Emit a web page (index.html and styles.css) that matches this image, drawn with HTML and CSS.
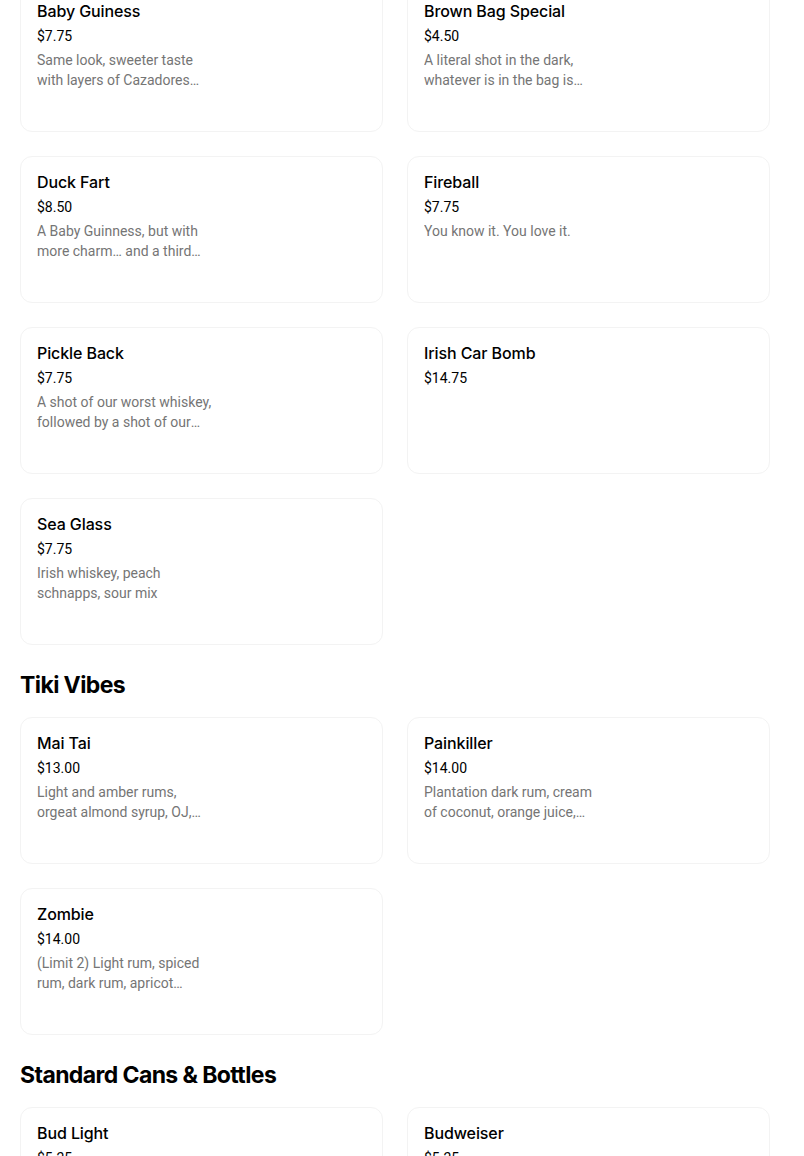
FILE: index.html
```html
<!DOCTYPE html>
<html>
<head>
<meta charset="utf-8">
<link rel="stylesheet" href="styles.css">
</head>
<body>
<main class="menu">
  <section class="section first">
    <div class="grid">
      <div class="card"><div class="name">Baby Guiness</div><div class="price">$7.75</div><div class="desc">Same look, sweeter taste with layers of Cazadores tequila</div></div>
      <div class="card"><div class="name">Brown Bag Special</div><div class="price">$4.50</div><div class="desc">A literal shot in the dark, whatever is in the bag is yours</div></div>
      <div class="card"><div class="name">Duck Fart</div><div class="price">$8.50</div><div class="desc">A Baby Guinness, but with more charm… and a third layer</div></div>
      <div class="card"><div class="name">Fireball</div><div class="price">$7.75</div><div class="desc">You know it. You love it.</div></div>
      <div class="card"><div class="name">Pickle Back</div><div class="price">$7.75</div><div class="desc">A shot of our worst whiskey, followed by a shot of our pickle brine</div></div>
      <div class="card"><div class="name">Irish Car Bomb</div><div class="price">$14.75</div></div>
      <div class="card"><div class="name">Sea Glass</div><div class="price">$7.75</div><div class="desc">Irish whiskey, peach schnapps, sour mix</div></div>
    </div>
  </section>
  <section class="section">
    <h2 class="heading">Tiki Vibes</h2>
    <div class="grid">
      <div class="card"><div class="name">Mai Tai</div><div class="price">$13.00</div><div class="desc">Light and amber rums, orgeat almond syrup, OJ, pineapple juice</div></div>
      <div class="card"><div class="name">Painkiller</div><div class="price">$14.00</div><div class="desc">Plantation dark rum, cream of coconut, orange juice, pineapple juice</div></div>
      <div class="card"><div class="name">Zombie</div><div class="price">$14.00</div><div class="desc">(Limit 2) Light rum, spiced rum, dark rum, apricot brandy</div></div>
    </div>
  </section>
  <section class="section">
    <h2 class="heading">Standard Cans &amp; Bottles</h2>
    <div class="grid">
      <div class="card"><div class="name">Bud Light</div><div class="price">$5.25</div></div>
      <div class="card"><div class="name">Budweiser</div><div class="price">$5.25</div></div>
    </div>
  </section>
</main>
</body>
</html>
```

FILE: styles.css
```css
html, body {
  margin: 0;
  padding: 0;
  background: #ffffff;
}
body {
  font-family: Inter, "Liberation Sans", sans-serif;
  color: #000000;
  overflow: hidden;
}
.menu {
  width: 750px;
  padding-left: 20px;
}
.section.first {
  margin-top: -15px;
}
.heading {
  margin: 24px 0 16px;
  font-size: 23px;
  line-height: 32px;
  font-weight: 700;
  letter-spacing: -0.6px;
}
.grid {
  display: grid;
  grid-template-columns: 363px 363px;
  column-gap: 24px;
  row-gap: 24px;
}
.card {
  box-sizing: border-box;
  height: 147px;
  border: 1px solid #f3f3f3;
  border-radius: 12px;
  padding: 13px 16px 0;
  background: #ffffff;
}
.name {
  font-size: 16px;
  line-height: 24px;
  font-weight: 500;
  color: #000000;
  letter-spacing: -0.1px;
}
.price {
  margin-top: 3px;
  font-family: Roboto, "Liberation Sans", sans-serif;
  font-size: 14px;
  line-height: 20px;
  color: #000000;
}
.desc {
  margin-top: 4px;
  width: 180px;
  font-family: Roboto, "Liberation Sans", sans-serif;
  font-size: 14px;
  line-height: 20px;
  color: #757575;
  display: -webkit-box;
  -webkit-line-clamp: 2;
  -webkit-box-orient: vertical;
  overflow: hidden;
}
```
